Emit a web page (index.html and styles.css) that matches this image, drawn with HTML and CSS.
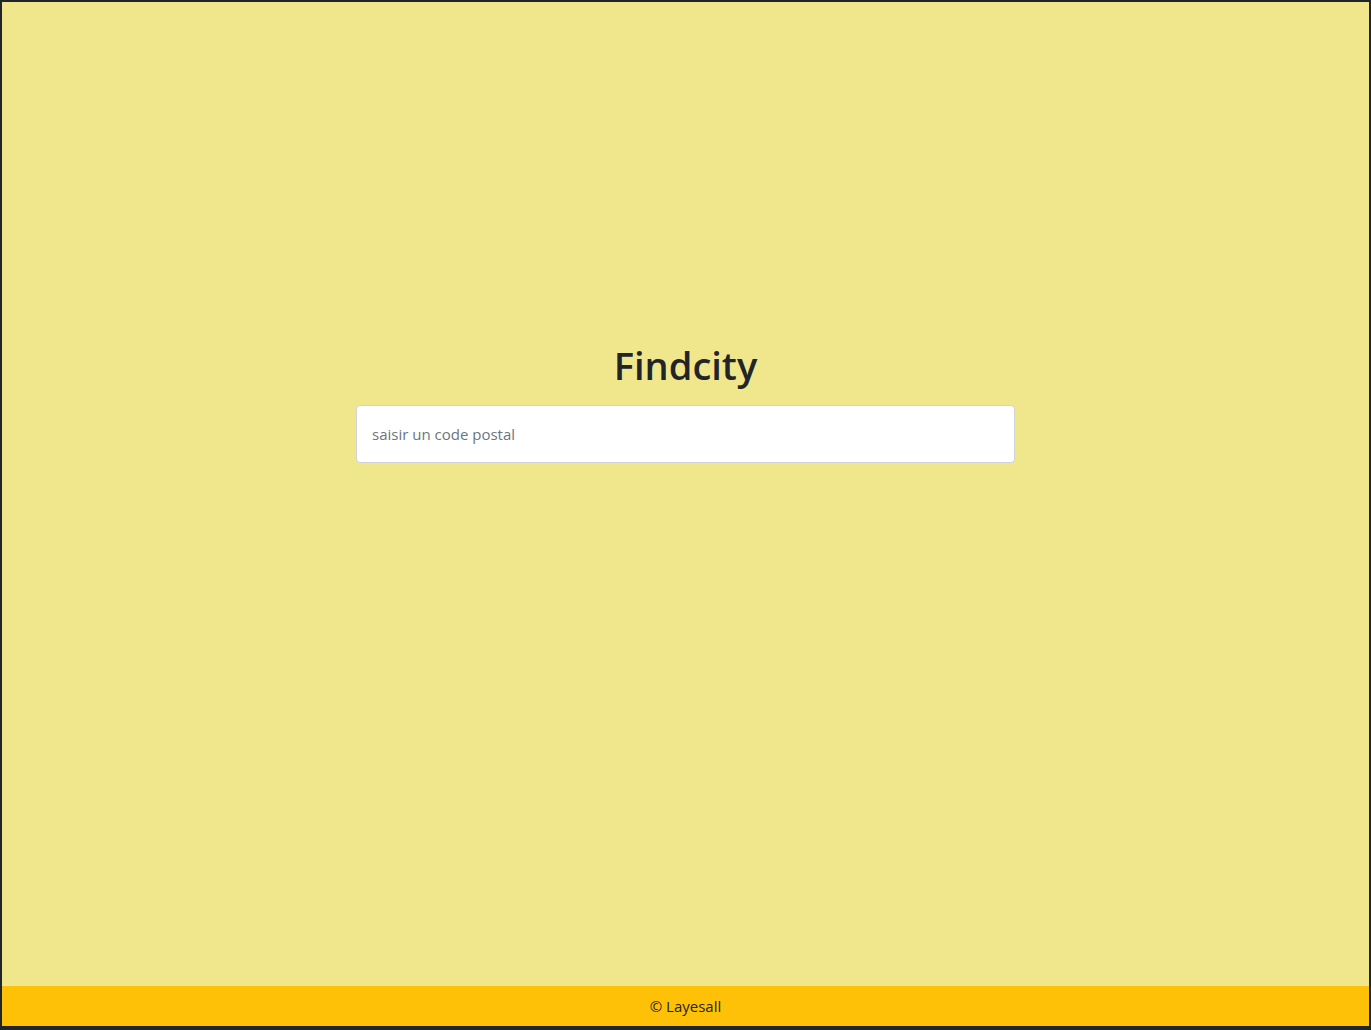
FILE: index.html
```html
<!DOCTYPE html>
<html lang="fr">
<head>
<meta charset="utf-8">
<title>Findcity</title>
<link rel="stylesheet" href="styles.css">
</head>
<body>
<div class="frame">
  <main class="main">
    <h2 class="title">Findcity</h2>
    <div class="field">
      <input class="input" type="text" placeholder="saisir un code postal">
    </div>
  </main>
  <footer class="footer">© Layesall</footer>
</div>
</body>
</html>
```

FILE: styles.css
```css
html, body {
  margin: 0;
  padding: 0;
  height: 100%;
}
body {
  font-family: "Open Sans", "Noto Sans", "Liberation Sans", sans-serif;
  color: #212529;
}
.frame {
  box-sizing: border-box;
  height: 1030px;
  border: 2px solid #212529;
  border-bottom-width: 4px;
  background: #f0e68c;
  display: flex;
  flex-direction: column;
}
.main {
  flex: 1;
  display: flex;
  flex-direction: column;
  align-items: center;
  padding-top: 340px;
}
.title {
  margin: 0;
  height: 63px;
  font-size: 38px;
  font-weight: 600;
  line-height: 46px;
  letter-spacing: 0;
}
.field {
  width: 659px;
}
.input {
  box-sizing: border-box;
  width: 100%;
  height: 58px;
  padding: 0 15px;
  border: 1px solid #ced4da;
  border-radius: 4px;
  background: #fff;
  font-family: inherit;
  font-size: 15px;
  color: #212529;
  outline: none;
}
.input::placeholder {
  color: #6c757d;
}
.footer {
  height: 40px;
  background: #ffc107;
  display: flex;
  align-items: center;
  justify-content: center;
  font-size: 15px;
}
```
